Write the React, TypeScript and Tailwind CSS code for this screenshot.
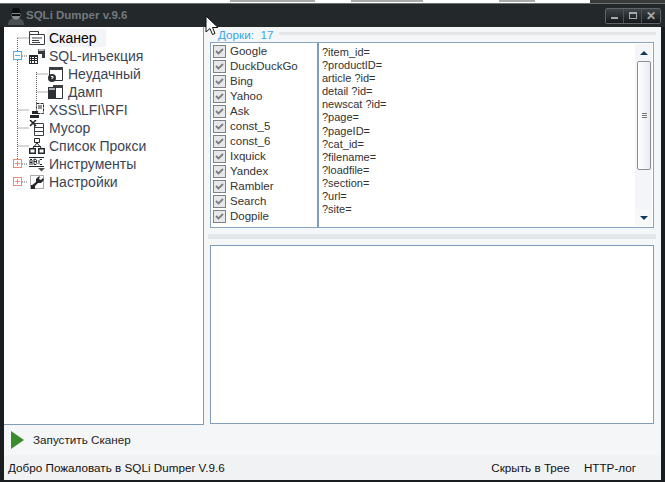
const engines = ["Google","DuckDuckGo","Bing","Yahoo","Ask","const_5","const_6","Ixquick","Yandex","Rambler","Search","Dogpile"];
const dorks = ["?item_id=","?productID=","article ?id=","detail ?id=","newscat ?id=","?page=","?pageID=","?cat_id=","?filename=","?loadfile=","?section=","?url=","?site="];

function Svg({ children, w = 16 }: { children: React.ReactNode; w?: number }) {
  return <svg width={w} height={16} viewBox={`0 0 ${w} 16`} className="shrink-0">{children}</svg>;
}

const IScan = () => (
  <Svg>
    <path d="M0.5 1.5h9v3h-9zM0.5 4.5h15v10h-15z" fill="#fff" stroke="#3a3f44" />
    <path d="M3 8h10M3 10.5h7M3 12.5h8" stroke="#3a3f44" />
  </Svg>
);
const ISql = () => (
  <Svg>
    <path d="M0 7h9v9H0z" fill="#23272a" />
    <path d="M1 9h1v1H1zM3 9h2v1H3zM6 9h2v1H6zM1 11h1v1H1zM3 11h2v1H3zM6 11h2v1H6zM1 13h1v2H1zM3 13h2v2H3zM6 13h2v2H6z" fill="#fff" />
    <path d="M9 1h7v9h-3V6H9z" fill="#34393d" />
    <path d="M9.5 1h6v2h-6z" fill="#b8bec3" />
  </Svg>
);
const IFail = () => (
  <Svg>
    <path d="M1.500 1.500h13v13h-13z" fill="#fff" stroke="#2d3135" />
    <path d="M1 1h14v3H1z" fill="#3a3f44" />
    <circle cx="4" cy="12" r="4" fill="#2d3135" />
    <path d="M3 10.500h2v1.500H4v1" fill="none" stroke="#fff" />
  </Svg>
);
const IDump = () => (
  <Svg>
    <path d="M5.500 1.500h9v13h-9z" fill="#fff" stroke="#2d3135" />
    <path d="M5 1h10v3H5z" fill="#3a3f44" />
    <path d="M0 3h8v12H0z" fill="#2d3135" />
    <path d="M1 4h6v2H1z" fill="#aab0b5" />
  </Svg>
);
const IXss = () => (
  <Svg>
    <path d="M7.500 1.500h7v10h-7z" fill="#fff" stroke="#23272a" strokeDasharray="3 1" />
    <path d="M9 4h4M9 6h4" stroke="#23272a" />
    <path d="M3 9h6v3H3zM1 13h9v3H1z" fill="#23272a" />
  </Svg>
);
const ITrash = () => (
  <Svg>
    <path d="M5.500 3.500h9v12h-9z" fill="#fff" stroke="#3a3f44" />
    <path d="M5 7.500h10M5 11.500h10" stroke="#3a3f44" />
    <path d="M1 0l6 6M7 0L1 6" stroke="#23272a" strokeWidth="1.600" />
  </Svg>
);
const IProxy = () => (
  <Svg>
    <path d="M5.500 0.500h5v4h-5z" fill="#fff" stroke="#23272a" />
    <path d="M8 5l-5 6M8 5l5 6M4 8.500h8" stroke="#23272a" fill="none" />
    <path d="M0 10h7v6H0zM9 10h7v6H9z" fill="#23272a" />
    <path d="M1.500 11.500h4v3h-4zM10.500 11.500h4v3h-4z" fill="#fff" />
  </Svg>
);
const ITools = () => (
  <Svg>
    <path d="M0 1h15v1H0zM0 10h15v1H0z" fill="#23272a" />
    <path d="M1 9V4l1-1 1 1v5M1 6.500h2M5 3v5.500h2l1-1-1-1.500 1-1-1-1.500zM5 5.500h2M13 3.500h-2l-1 1v3l1 1h2" fill="none" stroke="#23272a" />
    <path d="M9 12h7l-3.500 3.500z" fill="#4a5055" />
  </Svg>
);
const ISettings = () => (
  <Svg>
    <path d="M1.500 1.500h13v13h-13z" fill="#fff" stroke="#555" strokeDasharray="1 1" />
    <path d="M3 14l2-1 4-4 3 0 3-3-1-2-2 2-2-1 1-3-2 1-2 2v3l-5 4z" fill="#23272a" />
    <path d="M2 11h4v4H2z" fill="#23272a" />
  </Svg>
);

function Row({ icon, label, indent = false, selected = false }: { icon: React.ReactNode; label: string; indent?: boolean; selected?: boolean }) {
  return (
    <div className={`flex h-[18px] items-center ${indent ? "pl-[44px]" : "pl-[25px]"}`}>
      {icon}
      <span className={`ml-[2px] flex h-[18px] items-center pl-[2px] ${selected ? "bg-[#f3f4f7] pr-[9px] text-black" : "pr-1 text-[#3a4455]"}`}>
        {label}
      </span>
    </div>
  );
}

const TreeLines = () => (
  <svg width="50" height="180" className="absolute left-0 top-0">
    <path d="M13.500 11v126M32.500 45v38M13.500 11h11M18 29h6M32.500 47h11M32.500 65h11M13.500 83h11M13.500 101h11M13.500 119h11M18 137h6M18 155h6"
      stroke="#666" strokeDasharray="1 1" fill="none" />
    <rect x="9.500" y="24.500" width="8" height="8" fill="#fff" stroke="#4cb0ea" />
    <path d="M11 28.500h5" stroke="#4cb0ea" />
    <rect x="9.500" y="132.500" width="8" height="8" fill="#fff" stroke="#f08a70" />
    <path d="M11 136.500h5M13.500 134v5" stroke="#f08a70" />
    <rect x="9.500" y="150.500" width="8" height="8" fill="#fff" stroke="#f08a70" />
    <path d="M11 154.500h5M13.500 152v5" stroke="#f08a70" />
  </svg>
);

const Check = () => (
  <span className="flex h-[13px] w-[13px] shrink-0 items-center justify-center border border-[#7d8287] bg-[#e6e8ea]">
    <svg width="9" height="9" viewBox="0 0 9 9"><path d="M1 4l2.500 2.500L8 2" fill="none" stroke="#7a7f84" strokeWidth="1.800" /></svg>
  </span>
);

const WinBtn = ({ children }: { children: React.ReactNode }) => (
  <div className="flex h-[14px] w-[18px] items-center justify-center border-r border-[#4b5256] bg-gradient-to-b from-[#3e4448] to-[#16191b] last:border-r-0">
    {children}
  </div>
);

export default function App() {
  return (
    <div className="relative flex h-[482px] w-[665px] flex-col overflow-hidden bg-[#1a1d1f] font-['Liberation_Sans',sans-serif]">
      {/* remnant of the desktop above the window */}
      <div className="flex h-[3px] shrink-0 overflow-hidden">
        <div className="flex w-[590px] bg-white pl-[230px]">
          <span className="h-[2px] w-[85px] bg-[#aaaaaa]" />
          <span className="ml-[36px] h-[2px] w-[72px] bg-[#aaaaaa]" />
          <span className="ml-[76px] h-[2px] w-[36px] bg-[#aaaaaa]" />
        </div>
        <div className="flex-1 bg-[#3a3a3a]" />
      </div>

      {/* title bar */}
      <div className="flex h-[24px] shrink-0 items-center border-t border-[#6c7174] bg-[#23282b] pl-[7px] pr-[4px]">
        <svg width="18" height="19" viewBox="0 0 18 19" className="shrink-0">
          <path d="M1 19c0-5 3-7 8-7s8 2 8 7z" fill="#4a4f52" />
          <circle cx="9" cy="9" r="4.500" fill="#85898b" />
          <path d="M5 8h8v2H5z" fill="#0d0e0f" />
          <path d="M5 6l1-4h6l1 4 2 1H3z" fill="#0d0e0f" />
        </svg>
        <span className="ml-[1px] text-[11.500px] font-bold text-[#74797d]">SQLi Dumper v.9.6</span>
        <div className="ml-auto flex overflow-hidden rounded-[2px] border border-[#5e6569]">
          <WinBtn><span className="mt-[5px] h-[2px] w-[7px] bg-[#a5a9ac]" /></WinBtn>
          <WinBtn><span className="h-[7px] w-[8px] border border-t-2 border-[#a5a9ac]" /></WinBtn>
          <WinBtn><span className="text-[12px] font-bold leading-none text-[#a5a9ac]">✕</span></WinBtn>
        </div>
      </div>

      {/* client area */}
      <div className="mx-[4px] flex min-h-0 flex-1 flex-col bg-[#f4f6f8]">
        <div className="flex h-[398px] shrink-0">
          {/* tree */}
          <div className="relative w-[200px] shrink-0 border-r border-b border-[#7f9db9] bg-white pt-[2px] text-[14px]">
            <TreeLines />
            <Row icon={<IScan />} label="Сканер" selected />
            <Row icon={<ISql />} label="SQL-инъекция" />
            <Row icon={<IFail />} label="Неудачный" indent />
            <Row icon={<IDump />} label="Дамп" indent />
            <Row icon={<IXss />} label="XSS\LFI\RFI" />
            <Row icon={<ITrash />} label="Мусор" />
            <Row icon={<IProxy />} label="Список Прокси" />
            <Row icon={<ITools />} label="Инструменты" />
            <Row icon={<ISettings />} label="Настройки" />
          </div>

          {/* right pane */}
          <div className="flex min-w-0 flex-1 flex-col pl-[6px] pr-[7px]">
            <div className="-mr-[2px] flex h-[15px] items-center pl-[8px] text-[11.700px] text-[#3aa6e8]">
              <span>Дорки:&nbsp; 17</span>
              <span className="ml-[6px] mt-[-2px] h-[3px] flex-1 bg-[#e3e7ea]" />
            </div>
            <div className="flex h-[186px] shrink-0 border border-[#8aa5bf] bg-white text-[#333]">
              <div className="w-[108px] shrink-0 border-r-2 border-[#7f9db9] pl-[2px] pt-[1px] text-[11.500px]">
                {engines.map((e) => (
                  <div key={e} className="flex h-[15px] items-center gap-[4px]">
                    <Check />
                    <span>{e}</span>
                  </div>
                ))}
              </div>
              <div className="min-w-0 flex-1 pl-[3px] pt-[2px] text-[11px] leading-[13.100px]">
                {dorks.map((d) => (
                  <div key={d} className="translate-y-[1px]">{d}</div>
                ))}
              </div>
              {/* scrollbar */}
              <div className="my-[1px] mr-[1px] flex w-[17px] shrink-0 flex-col bg-[#f3f5f8]">
                <div className="flex h-[17px] items-center justify-center">
                  <span className="h-0 w-0 border-x-[4px] border-b-[4px] border-x-transparent border-b-[#123a5c]" />
                </div>
                <div className="ml-[2px] mr-[1px] flex h-[109px] items-center justify-center rounded-[2px] border border-[#8a8f94] bg-gradient-to-r from-white to-[#e9ecf1]">
                  <span className="h-[5px] w-[5px] border-y border-[#777] bg-[linear-gradient(#777,#777)] bg-[length:100%_1px] bg-center bg-no-repeat" />
                </div>
                <div className="flex-1" />
                <div className="flex h-[17px] items-center justify-center bg-[#f7f8fa]">
                  <span className="h-0 w-0 border-x-[4px] border-t-[4px] border-x-transparent border-t-[#123a5c]" />
                </div>
              </div>
            </div>
            <div className="-mx-[2px] mb-[6px] mt-[6px] h-[5px] shrink-0 bg-[#e3e7ea]" />
            <div className="h-[179px] shrink-0 border border-[#7f9db9] bg-white" />
          </div>
        </div>

        {/* toolbar */}
        <div className="flex h-[30px] shrink-0 items-center pl-[7px] text-[11.700px] text-[#222]">
          <span className="h-0 w-0 border-y-[9px] border-l-[13px] border-y-transparent border-l-[#3c8b2e]" />
          <span className="ml-[9px]">Запустить Сканер</span>
        </div>

        {/* status bar */}
        <div className="flex h-[25px] shrink-0 items-center bg-[#f1f2f3] pl-[4px] pr-[4px] text-[11.700px] text-[#111]">
          <span>Добро Пожаловать в SQLi Dumper V.9.6</span>
          <span className="ml-auto">Скрыть в Трее</span>
          <span className="ml-[14px] mr-[21px]">HTTP-лог</span>
        </div>
      </div>
      <div className="h-[4px] shrink-0" />

      {/* mouse cursor */}
      <svg width="14" height="22" viewBox="0 0 14 22" className="absolute left-[205px] top-[15px]">
        <path d="M1 1v16l4-3.500 2.500 6 2.500-1-2.500-6H13z" fill="#fff" stroke="#111" />
      </svg>
    </div>
  );
}
